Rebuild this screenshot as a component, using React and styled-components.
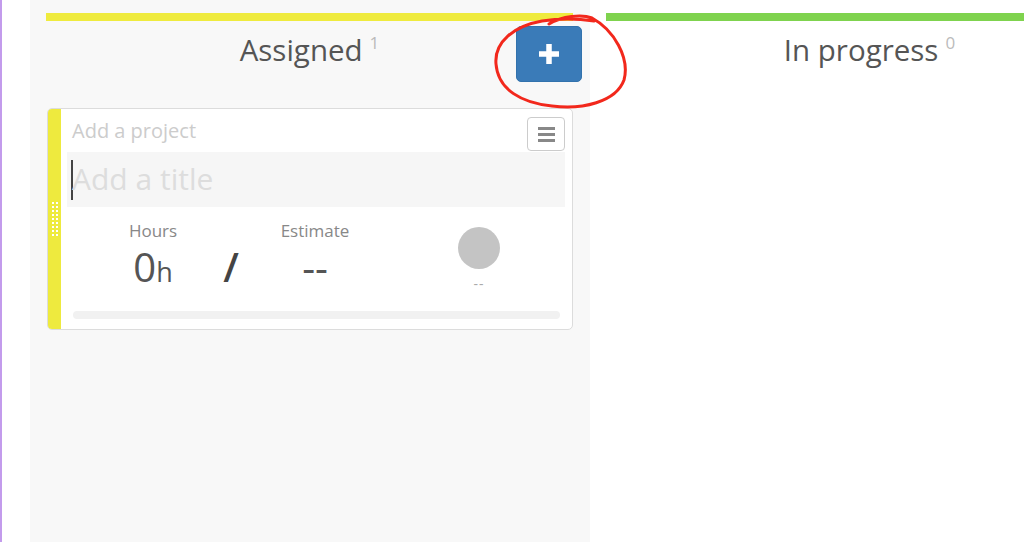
import React from 'react';
import styled, { createGlobalStyle } from 'styled-components';

const Global = createGlobalStyle`
  html, body { margin: 0; padding: 0; background: #fff; }
  body { font-family: 'Open Sans', 'Liberation Sans', sans-serif; overflow: hidden; }
`;

const Page = styled.div`
  position: relative;
  display: flex;
  width: 1024px;
  height: 542px;
  overflow: hidden;
  border-left: 2px solid #c39bec;
  box-sizing: border-box;
`;

const Board = styled.div`
  display: flex;
  margin-left: 28px;
  flex-shrink: 0;
`;

const Column = styled.div`
  width: 560px;
  flex-shrink: 0;
  box-sizing: border-box;
  padding: 13px 17px 0 16px;
  background: ${p => (p.$shaded ? '#f8f8f8' : '#fff')};
`;

const Bar = styled.div`
  height: 8px;
  background: ${p => p.$color};
`;

const Header = styled.div`
  display: grid;
  grid-template-columns: 1fr auto 1fr;
  height: 87px;
  align-items: start;
`;

const Title = styled.h2`
  grid-column: 2;
  margin: 2px 0 0;
  font-weight: 400;
  font-size: 29.5px;
  line-height: 40px;
  color: #555;
  white-space: nowrap;
`;

const Count = styled.sup`
  font-size: 17px;
  color: #bbb;
  margin-left: 7px;
  vertical-align: 12px;
`;

const AddButton = styled.button`
  grid-column: 3;
  justify-self: end;
  margin: 5px -9px 0 0;
  width: 66px;
  height: 56px;
  border: 1px solid #3272ad;
  border-radius: 5px;
  background: #3a7bb8;
  display: flex;
  align-items: center;
  justify-content: center;
  padding: 0;
`;

const Card = styled.div`
  display: flex;
  margin-left: 1px;
  border: 1px solid #dcdcdc;
  border-radius: 5px;
  background: #fff;
  overflow: hidden;
  height: 222px;
  box-sizing: border-box;
`;

const Handle = styled.div`
  width: 13px;
  flex-shrink: 0;
  background-color: #eeea3e;
  display: flex;
  align-items: flex-start;
  justify-content: center;
  padding-top: 92px;
  box-sizing: border-box;
`;

const Grip = styled.div`
  width: 8px;
  height: 36px;
  background-image: radial-gradient(circle, #fff 1.1px, transparent 1.3px);
  background-size: 4px 4px;
`;

const Body = styled.div`
  flex: 1;
  min-width: 0;
  display: flex;
  flex-direction: column;
  padding: 0 7px 0 6px;
`;

const ProjectRow = styled.div`
  display: flex;
  justify-content: space-between;
  align-items: flex-start;
  height: 43px;
  padding-top: 8px;
  box-sizing: border-box;
`;

const Project = styled.span`
  font-size: 20px;
  line-height: 28px;
  color: #ccc;
  padding-left: 5px;
`;

const MenuButton = styled.button`
  width: 38px;
  height: 34px;
  border: 1px solid #ccc;
  border-radius: 4px;
  background: #fff;
  display: flex;
  flex-direction: column;
  align-items: center;
  justify-content: center;
  gap: 3px;
  padding: 0;
`;

const MenuLine = styled.span`
  width: 17px;
  height: 3px;
  background: #888;
`;

const TitleBox = styled.div`
  display: flex;
  align-items: center;
  height: 55px;
  background: #f6f6f6;
  padding-left: 4px;
`;

const Caret = styled.span`
  width: 2px;
  height: 40px;
  background: #444;
`;

const TitleText = styled.span`
  font-size: 30px;
  color: #ddd;
  margin-left: -1px;
  margin-top: -3px;
`;

const Stats = styled.div`
  display: grid;
  grid-template-columns: 100px 56px 112px 1fr;
  padding-left: 36px;
  height: 104px;
`;

const Stat = styled.div`
  display: flex;
  flex-direction: column;
  align-items: center;
  padding-top: 13px;
  padding-left: ${p => p.$shift || 0}px;
`;

const Label = styled.span`
  font-size: 17px;
  line-height: 22px;
  color: #888;
`;

const Value = styled.span`
  font-size: 40px;
  line-height: 48px;
  color: #555;
  margin-top: 1px;
`;

const Unit = styled.span`
  font-size: 27px;
`;

const Slash = styled.span`
  font-size: 40px;
  line-height: 48px;
  color: #444;
  text-align: center;
  padding-top: 36px;
  font-weight: 600;
`;

const Avatar = styled.div`
  width: 42px;
  height: 42px;
  border-radius: 50%;
  background: #c4c4c4;
  margin-top: 7px;
`;

const Small = styled.span`
  font-size: 14px;
  line-height: 16px;
  color: #aaa;
  letter-spacing: 1px;
  margin-top: 7px;
`;

const Progress = styled.div`
  height: 8px;
  border-radius: 4px;
  background: #f1f1f1;
  margin: 0 5px 0 6px;
`;

const Annotation = styled.svg`
  position: absolute;
  left: 0;
  top: 0;
  pointer-events: none;
`;

export default function App() {
  return (
    <Page>
      <Global />
      <Board>
        <Column $shaded>
          <Bar $color="#efeb3e" />
          <Header>
            <Title>Assigned<Count>1</Count></Title>
            <AddButton>
              <svg width="22" height="22" viewBox="0 0 22 22">
                <path d="M11 1v20M1 11h20" stroke="#fff" strokeWidth="5.5" />
              </svg>
            </AddButton>
          </Header>
          <Card>
            <Handle><Grip /></Handle>
            <Body>
              <ProjectRow>
                <Project>Add a project</Project>
                <MenuButton>
                  <MenuLine />
                  <MenuLine />
                  <MenuLine />
                </MenuButton>
              </ProjectRow>
              <TitleBox>
                <Caret />
                <TitleText>Add a title</TitleText>
              </TitleBox>
              <Stats>
                <Stat>
                  <Label>Hours</Label>
                  <Value>0<Unit>h</Unit></Value>
                </Stat>
                <Slash>/</Slash>
                <Stat>
                  <Label>Estimate</Label>
                  <Value>--</Value>
                </Stat>
                <Stat $shift={22}>
                  <Avatar />
                  <Small>--</Small>
                </Stat>
              </Stats>
              <Progress />
            </Body>
          </Card>
        </Column>
        <Column>
          <Bar $color="#7fd34e" />
          <Header>
            <Title>In progress<Count>0</Count></Title>
          </Header>
        </Column>
      </Board>
      <Annotation width="1024" height="542">
        <path
          d="M547 24 C560 16 580 14 590 18 C612 30 628 58 622 80 C614 102 580 110 550 106 C520 103 496 90 494 64 C492 42 512 26 540 21 C560 18 578 19 592 21"
          fill="none"
          stroke="#f2281c"
          strokeWidth="3"
          strokeLinecap="round"
        />
      </Annotation>
    </Page>
  );
}
